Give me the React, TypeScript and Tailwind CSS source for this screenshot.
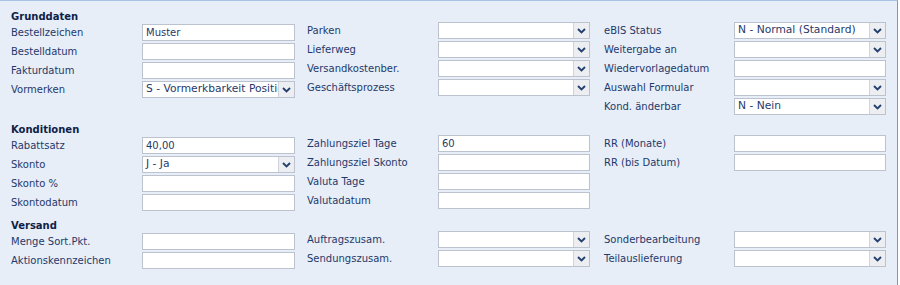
type Field = { label: string; kind: "text" | "select"; value?: string }

type Column = { header?: string; fields: Field[] }

const sections: Column[][] = [
  [
    {
      header: "Grunddaten",
      fields: [
        { label: "Bestellzeichen", kind: "text", value: "Muster" },
        { label: "Bestelldatum", kind: "text" },
        { label: "Fakturdatum", kind: "text" },
        { label: "Vormerken", kind: "select", value: "S - Vormerkbarkeit Position" },
      ],
    },
    {
      fields: [
        { label: "Parken", kind: "select" },
        { label: "Lieferweg", kind: "select" },
        { label: "Versandkostenber.", kind: "select" },
        { label: "Geschäftsprozess", kind: "select" },
      ],
    },
    {
      fields: [
        { label: "eBIS Status", kind: "select", value: "N - Normal (Standard)" },
        { label: "Weitergabe an", kind: "select" },
        { label: "Wiedervorlagedatum", kind: "text" },
        { label: "Auswahl Formular", kind: "select" },
        { label: "Kond. änderbar", kind: "select", value: "N - Nein" },
      ],
    },
  ],
  [
    {
      header: "Konditionen",
      fields: [
        { label: "Rabattsatz", kind: "text", value: "40,00" },
        { label: "Skonto", kind: "select", value: "J - Ja" },
        { label: "Skonto %", kind: "text" },
        { label: "Skontodatum", kind: "text" },
      ],
    },
    {
      fields: [
        { label: "Zahlungsziel Tage", kind: "text", value: "60" },
        { label: "Zahlungsziel Skonto", kind: "text" },
        { label: "Valuta Tage", kind: "text" },
        { label: "Valutadatum", kind: "text" },
      ],
    },
    {
      fields: [
        { label: "RR (Monate)", kind: "text" },
        { label: "RR (bis Datum)", kind: "text" },
      ],
    },
  ],
  [
    {
      header: "Versand",
      fields: [
        { label: "Menge Sort.Pkt.", kind: "text" },
        { label: "Aktionskennzeichen", kind: "text" },
      ],
    },
    {
      fields: [
        { label: "Auftragszusam.", kind: "select" },
        { label: "Sendungszusam.", kind: "select" },
      ],
    },
    {
      fields: [
        { label: "Sonderbearbeitung", kind: "select" },
        { label: "Teilauslieferung", kind: "select" },
      ],
    },
  ],
]

function Chevron() {
  return (
    <svg width="9" height="6" viewBox="0 0 9 6">
      <polyline points="1,1 4.5,4.5 8,1" fill="none" stroke="#23406f" strokeWidth="1.9" />
    </svg>
  )
}

function Control({ field, wide }: { field: Field; wide: boolean }) {
  const width = wide ? "w-[153px]" : "w-[152px]"
  if (field.kind === "text") {
    return (
      <div className={`${width} h-[17px] bg-white border border-[#bcc3ce] flex items-center px-[3px] overflow-hidden`}>
        <span className="whitespace-nowrap">{field.value}</span>
      </div>
    )
  }
  return (
    <div className={`${width} h-[17px] bg-white border border-[#bcc3ce] flex`}>
      <div className="flex-1 flex items-center px-[3px] overflow-hidden text-[10.7px]">
        <span className="whitespace-nowrap">{field.value}</span>
      </div>
      <div className="w-[16px] bg-[#eceef2] border-l border-[#cfd4dc] flex items-center justify-center">
        <Chevron />
      </div>
    </div>
  )
}

function FieldColumn({ column, index }: { column: Column; index: number }) {
  return (
    <div className="flex flex-col">
      {column.header ? (
        <div className="h-[16px] flex items-center font-bold text-[#0e2147]">{column.header}</div>
      ) : (
        <div className="h-[14px]" />
      )}
      <div className="flex flex-col gap-[2px]">
        {column.fields.map((f) => (
          <div key={f.label} className="flex items-center h-[17px]">
            <div className={index === 2 ? "w-[130px]" : "w-[131px]"}>{f.label}</div>
            <Control field={f} wide={index === 0} />
          </div>
        ))}
      </div>
    </div>
  )
}

export default function App() {
  return (
    <div className="w-[900px] h-[285px] bg-white">
      <div
        className="w-[898px] h-[285px] bg-[#e7eef8] border-t border-t-[#a7c3e6] border-r border-r-[#8397b3] pl-[11px] pt-[7px] text-[10px] text-[#1f396a]"
        style={{ fontFamily: '"DejaVu Sans", Verdana, sans-serif' }}
      >
        <div className="flex flex-col gap-[6px]">
          {sections.map((cols, si) => (
            <div key={si} className="grid grid-cols-[296px_297px_auto] items-start">
              {cols.map((c, ci) => (
                <FieldColumn key={ci} column={c} index={ci} />
              ))}
            </div>
          ))}
        </div>
      </div>
    </div>
  )
}
